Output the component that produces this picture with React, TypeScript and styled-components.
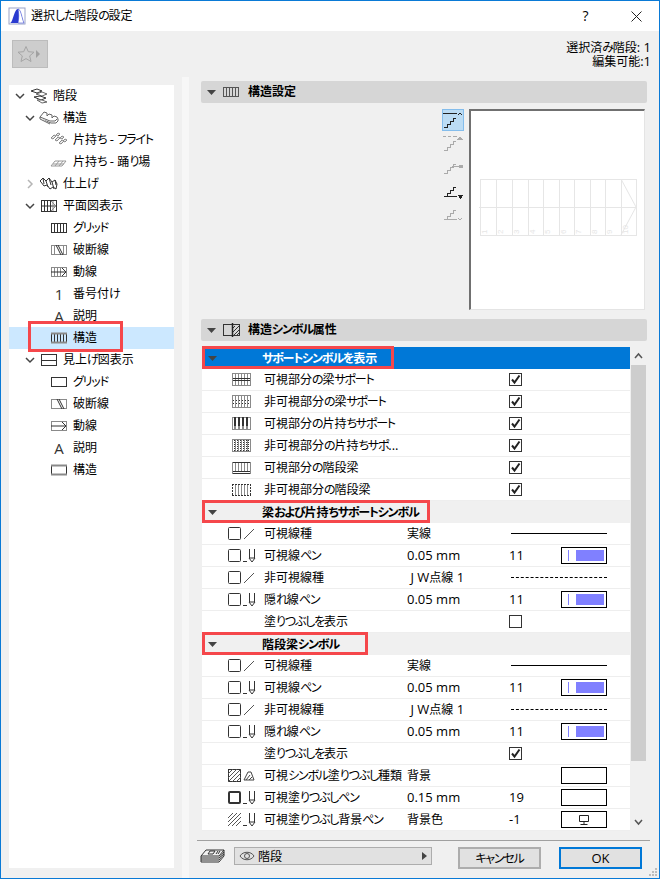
import React from "react";
import styled, { createGlobalStyle } from "styled-components";

const Global = createGlobalStyle`
    html, body { margin: 0; padding: 0; background: #f0f0f0; }
    body {
        font-family: "Noto Sans CJK JP", "Noto Sans", sans-serif;
        font-size: 12px;
        line-height: 14px;
        font-feature-settings: "palt";
        color: #000;
    }
`;

const Kana = styled.span`
    letter-spacing: -1.2px;
`;

const Latin = styled.span`
    font-family: "Open Sans", "Noto Sans CJK JP", sans-serif;
    font-size: 13px;
    line-height: 14px;
    white-space: pre;
`;

// Meiryo UI has narrow kana and a larger latin face, so split the text into runs
function Jp({ text }: { text: string }) {
    const parts = text.split(/([ぁ-んァ-ヶー]+|[0-9A-Za-z.:\- ]+)/).filter(Boolean);
    return (
        <>
            {parts.map((s, i) => {
                if (/^[ぁ-んァ-ヶー]/.test(s)) return <Kana key={i}>{s}</Kana>;
                if (/^[0-9A-Za-z.:\- ]/.test(s)) return <Latin key={i}>{s}</Latin>;
                return <span key={i}>{s}</span>;
            })}
        </>
    );
}

const Window = styled.div`
    position: relative;
    box-sizing: border-box;
    width: 660px;
    height: 879px;
    border: 1px solid #0a7ad6;
    display: flex;
    flex-direction: column;
    overflow: hidden;
    background: #f0f0f0;
`;

const TitleBar = styled.div`
    height: 30px;
    flex: none;
    background: #fff;
    display: flex;
    align-items: center;
    padding-left: 8px;
    gap: 6px;
`;

const TitleText = styled.span`
    flex: 1;
    margin-bottom: 2px;
`;

const TitleButton = styled.div`
    width: 45px;
    height: 30px;
    display: flex;
    align-items: center;
    justify-content: center;
    font-family: "Open Sans", sans-serif;
    font-size: 14px;
`;

const TopStrip = styled.div`
    height: 46px;
    flex: none;
    display: flex;
    justify-content: space-between;
    padding: 9px 8px 0 11px;
    box-sizing: border-box;
`;

const FavButton = styled.div`
    box-sizing: border-box;
    width: 36px;
    height: 28px;
    background: #cdcdcd;
    border: 1px solid #bcbcbc;
    display: flex;
    align-items: center;
    padding-left: 4px;
`;

const SelectionInfo = styled.div`
    text-align: right;
`;

const Main = styled.div`
    flex: 1;
    display: flex;
    min-height: 0;
`;

const Sidebar = styled.div`
    width: 181px;
    flex: none;
    box-sizing: border-box;
    padding: 8px 8px 10px 8px;
    display: flex;
`;

const Tree = styled.div`
    flex: 1;
    background: #fff;
`;

const TreeRow = styled.div<{ $level: number; $selected?: boolean }>`
    position: relative;
    height: 22px;
    display: flex;
    align-items: center;
    padding-left: ${(p) => 6 + p.$level * 10}px;
    background: ${(p) => (p.$selected ? "#cce8ff" : "transparent")};
`;

const Twisty = styled.div`
    width: 16px;
    flex: none;
    display: flex;
`;

const TreeIconBox = styled.div`
    width: 16px;
    height: 16px;
    flex: none;
    display: flex;
    align-items: center;
    justify-content: center;
    font-family: "Open Sans", sans-serif;
    font-size: 15px;
    color: #333;
`;

const TreeLabel = styled.span`
    margin: 0 0 2px 6px;
    white-space: nowrap;
`;

const Splitter = styled.div`
    width: 7px;
    flex: none;
    background: #f7f7f7;
`;

const RightPane = styled.div`
    flex: 1;
    margin-left: 11px;
    display: flex;
    flex-direction: column;
    min-width: 0;
`;

const PanelHeader = styled.div<{ $gap: number }>`
    box-sizing: border-box;
    width: 446px;
    height: 22px;
    margin: ${(p) => p.$gap}px 0 0 1px;
    background: #d6d6d6;
    border-radius: 2px;
    display: flex;
    align-items: center;
    padding-left: 6px;
    font-weight: 700;
    flex: none;
`;

const HeaderIcon = styled.div`
    margin-left: 7px;
    width: 18px;
    display: flex;
`;

const HeaderText = styled.span`
    margin: 0 0 2px 7px;
`;

const PreviewArea = styled.div`
    height: 201px;
    flex: none;
    margin-top: 6px;
    display: flex;
    justify-content: flex-end;
    padding-right: 14px;
    gap: 5px;
`;

const ModeColumn = styled.div`
    width: 22px;
    display: flex;
    flex-direction: column;
`;

const ModeButton = styled.div<{ $on?: boolean }>`
    box-sizing: border-box;
    width: 22px;
    height: 22px;
    margin-bottom: 1px;
    display: flex;
    align-items: center;
    justify-content: center;
    background: ${(p) => (p.$on ? "#bcdcf4" : "transparent")};
    border: 1px solid ${(p) => (p.$on ? "#84bdec" : "transparent")};
`;

const Preview = styled.div`
    box-sizing: border-box;
    width: 176px;
    height: 201px;
    background: #fff;
    border-top: 2px solid #707070;
    border-left: 2px solid #707070;
    border-right: 1px solid #e4e4e4;
    border-bottom: 1px solid #e4e4e4;
`;

const TableWrap = styled.div`
    width: 445px;
    height: 484px;
    margin: 6px 0 0 2px;
    display: flex;
    flex: none;
`;

const Table = styled.div`
    width: 428px;
    flex: none;
    display: flex;
    flex-direction: column;
    background: #fff;
`;

const Row = styled.div`
    box-sizing: border-box;
    height: 22px;
    flex: none;
    display: grid;
    grid-template-columns: 62px 143px 102px 52px 46px;
    align-items: center;
    border-bottom: 1px solid #eeeeee;
    white-space: nowrap;
`;

const SectionRow = styled.div<{ $active?: boolean }>`
    position: relative;
    height: 22px;
    flex: none;
    display: flex;
    align-items: center;
    background: ${(p) => (p.$active ? "#0078d7" : "#f0f0f0")};
    color: ${(p) => (p.$active ? "#fff" : "#000")};
    font-weight: 700;
    padding-left: 6px;
`;

const SectionLabel = styled.span`
    margin: 0 0 1px 45px;
`;

const Callout = styled.div<{ $left: number; $top: number; $w: number; $h: number }>`
    position: absolute;
    box-sizing: border-box;
    left: ${(p) => p.$left}px;
    top: ${(p) => p.$top}px;
    width: ${(p) => p.$w}px;
    height: ${(p) => p.$h}px;
    border: 3px solid #f5474b;
    z-index: 2;
`;

const IconCell = styled.div<{ $left: number }>`
    display: flex;
    align-items: center;
    gap: 2px;
    padding-left: ${(p) => p.$left}px;
`;

const ValueCell = styled.div`
    margin-bottom: 1px;
`;

const LineSample = styled.div<{ $dashed?: boolean }>`
    grid-column: 4 / span 2;
    margin-left: 2px;
    border-top: 1px ${(p) => (p.$dashed ? "dashed" : "solid")} #000;
`;

const CheckBox = styled.div`
    box-sizing: border-box;
    width: 13px;
    height: 13px;
    border: 1px solid #333;
    background: #fff;
    display: flex;
    align-items: center;
    justify-content: center;
`;

const Swatch = styled.div`
    box-sizing: border-box;
    width: 46px;
    height: 17px;
    border: 1px solid #000;
    background: #fff;
    display: flex;
    align-items: center;
    justify-content: center;
`;

const PenSwatch = styled(Swatch)`
    justify-content: flex-start;
    padding-left: 6px;
    &::before {
        content: "";
        width: 1px;
        height: 11px;
        background: #8080ff;
    }
    &::after {
        content: "";
        width: 28px;
        height: 11px;
        margin-left: 7px;
        background: #8080ff;
    }
`;

const ScrollBar = styled.div`
    width: 15px;
    margin-left: 1px;
    flex: none;
    display: flex;
    flex-direction: column;
    align-items: center;
    background: #f0f0f0;
`;

const ScrollArrow = styled.div`
    height: 18px;
    flex: none;
    display: flex;
    align-items: center;
    justify-content: center;
`;

const ScrollThumb = styled.div`
    width: 15px;
    height: 396px;
    flex: none;
    background: #cdcdcd;
`;

const ScrollGap = styled.div`
    flex: 1;
`;

const Footer = styled.div`
    box-sizing: border-box;
    flex: 1;
    margin: 9px 9px 0 -3px;
    border-top: 1px solid #a0a0a0;
    display: flex;
    padding: 6px 0 0 3px;
    align-items: flex-start;
`;

const LayerIcon = styled.div`
    width: 34px;
    flex: none;
`;

const Dropdown = styled.div`
    box-sizing: border-box;
    width: 198px;
    height: 18px;
    background: #e1e1e1;
    border: 1px solid #adadad;
    display: flex;
    align-items: center;
    padding: 0 4px;
    gap: 3px;
`;

const DropdownText = styled.span`
    flex: 1;
    margin-bottom: 1px;
`;

const DialogButton = styled.div<{ $primary?: boolean; $gap: number }>`
    box-sizing: border-box;
    width: 83px;
    height: 22px;
    margin-left: ${(p) => p.$gap}px;
    border: 2px solid ${(p) => (p.$primary ? "#0078d7" : "#adadad")};
    background: #e1e1e1;
    display: flex;
    align-items: center;
    justify-content: center;
`;

const Grip = styled.svg`
    position: absolute;
    right: 1px;
    bottom: 1px;
`;

const Ico = styled.svg`
    display: block;
    flex: none;
    overflow: visible;
`;

const g = "#8a8a8a";
const d = "#333";

function Down({ color = "#444" }: { color?: string }) {
    return (
        <Ico width="10" height="6" viewBox="0 0 10 6">
            <path d="M1 1l4 4 4-4" fill="none" stroke={color} strokeWidth="1.5" />
        </Ico>
    );
}

function RightChevron() {
    return (
        <Ico width="10" height="10" viewBox="0 0 10 10">
            <path d="M3 1l4 4-4 4" fill="none" stroke="#b5b5b5" strokeWidth="1.5" />
        </Ico>
    );
}

function Tri() {
    return (
        <Ico width="9" height="5" viewBox="0 0 9 5">
            <path d="M0 0h9L4.5 5z" fill="#444" />
        </Ico>
    );
}

function bars(xs: number[], y1: number, y2: number, color: string, dash?: string) {
    return xs.map((x) => (
        <path key={x} d={`M${x + 0.5} ${y1}V${y2}`} stroke={color} strokeDasharray={dash} />
    ));
}

const treeIcons: Record<string, React.ReactNode> = {
    stair: (
        <g fill="#fff" stroke={d}>
            <path d="M0 3l6-2 5 2-5 2z" />
            <path d="M5 6l6-2 5 2-5 2z" stroke="#666" />
            <path d="M3 9l6-1 6 2-5 2z" />
            <path d="M6 12l5 0 5 2-5 1z" stroke="#666" />
        </g>
    ),
    struct: (
        <g fill="#fff" stroke="#666">
            <path d="M-1 7l4-5 3 1v3l2-2 3 1v3l2-2 3 1 1 2v2l-2 2h-5l-10-4z" />
            <path d="M-1 7v2l10 5M-1 7l10 4h5l2-2" />
        </g>
    ),
    flight: (
        <g fill="#e8e8e8" stroke="#888">
            <path d="M0 6l3-3 2 1-3 3z" />
            <path d="M4 8l3-3 2 1-3 3z" />
            <path d="M8 11l3-3 2 1-3 3z" />
            <path d="M5 3l2-2 2 1-2 2z" />
            <path d="M9 6l2-2 2 1-2 2z" />
            <path d="M12 9l2-2 2 1-2 2z" />
        </g>
    ),
    landing: (
        <g fill="none" stroke="#999">
            <path d="M0 12l4-5h11l-4 5z" />
            <path d="M4 12l4-5M8 12l4-5M2 10h11" />
        </g>
    ),
    finish: (
        <g fill="#fff" stroke={d}>
            <path d="M-1 5l3-3 3 3 3-3 3 4 3-2 2 4-1 5-3-2-3 2-3-4-3 1-3-4z" />
            <path d="M2 2l1 6M5 5l2 6M8 2l2 7M11 6l2 7M14 4l1 5" />
        </g>
    ),
    planGrid: (
        <g fill="none">
            <rect x="0.5" y="2.5" width="15" height="11" stroke={d} />
            {bars([3, 6, 9], 3, 13, d)}
            <path d="M0 8h16" stroke={d} />
            <path d="M10 3l5 5-5 5M12 3v10" stroke={g} />
        </g>
    ),
    grid: (
        <g fill="none">
            <rect x="0.5" y="3.5" width="15" height="9" stroke={d} />
            {bars([3, 6, 9, 12], 4, 12, d)}
        </g>
    ),
    break: (
        <g fill="none">
            <rect x="0.5" y="3.5" width="15" height="9" stroke={g} />
            {bars([3, 12], 4, 12, g)}
            <path d="M5 3l5 10M7 3l5 10" stroke={d} />
        </g>
    ),
    walk: (
        <g fill="none">
            <rect x="0.5" y="3.5" width="15" height="9" stroke={g} />
            {bars([3, 6, 9], 4, 12, g)}
            <path d="M0 8h15M11 4l4 4-4 4" stroke={d} />
        </g>
    ),
    structBar: (
        <g fill="none">
            <rect x="0.5" y="3.5" width="15" height="9" stroke={d} />
            {bars([3, 6, 9, 12], 4, 12, d)}
            <path d="M0 3.5h16M0 12.5h16" stroke={g} strokeWidth="2" />
        </g>
    ),
    elevation: (
        <g fill="none" stroke={d}>
            <rect x="0.5" y="2.5" width="15" height="11" />
            <path d="M0 8h16" />
        </g>
    ),
    gridEmpty: <rect x="0.5" y="3.5" width="15" height="9" fill="none" stroke={d} />,
    breakEmpty: (
        <g fill="none">
            <rect x="0.5" y="3.5" width="15" height="9" stroke={g} />
            <path d="M6 3l5 10M8 3l5 10" stroke={d} />
        </g>
    ),
    walkEmpty: (
        <g fill="none">
            <rect x="0.5" y="3.5" width="15" height="9" stroke={g} />
            <path d="M0 8h15M11 4l4 4-4 4" stroke={d} />
        </g>
    ),
    structEmpty: (
        <g fill="none">
            <rect x="0.5" y="3.5" width="15" height="9" stroke={d} />
            <path d="M0 3.5h16M0 12.5h16" stroke={g} strokeWidth="2" />
        </g>
    ),
};

function TreeIcon({ kind }: { kind: string }) {
    if (kind === "1" || kind === "A") return <TreeIconBox>{kind}</TreeIconBox>;
    return (
        <TreeIconBox>
            <Ico width="16" height="16" viewBox="0 0 16 16" shapeRendering={kind === "grid" || kind === "elevation" ? "crispEdges" : undefined}>
                {treeIcons[kind]}
            </Ico>
        </TreeIconBox>
    );
}

type TreeItem = { level: number; icon: string; label: string; open?: boolean; closed?: boolean; selected?: boolean };

const treeItems: TreeItem[] = [
    { level: 0, icon: "stair", label: "階段", open: true },
    { level: 1, icon: "struct", label: "構造", open: true },
    { level: 2, icon: "flight", label: "片持ち - フライト" },
    { level: 2, icon: "landing", label: "片持ち - 踊り場" },
    { level: 1, icon: "finish", label: "仕上げ", closed: true },
    { level: 1, icon: "planGrid", label: "平面図表示", open: true },
    { level: 2, icon: "grid", label: "グリッド" },
    { level: 2, icon: "break", label: "破断線" },
    { level: 2, icon: "walk", label: "動線" },
    { level: 2, icon: "1", label: "番号付け" },
    { level: 2, icon: "A", label: "説明" },
    { level: 2, icon: "structBar", label: "構造", selected: true },
    { level: 1, icon: "elevation", label: "見上げ図表示", open: true },
    { level: 2, icon: "gridEmpty", label: "グリッド" },
    { level: 2, icon: "breakEmpty", label: "破断線" },
    { level: 2, icon: "walkEmpty", label: "動線" },
    { level: 2, icon: "A", label: "説明" },
    { level: 2, icon: "structEmpty", label: "構造" },
];

const symbolXs = [3, 6, 9, 12, 15];
const cantiXs = [2, 3, 6, 7, 10, 11, 14, 15];

const symbolIcons: Record<string, React.ReactNode> = {
    beam: (
        <g fill="none">
            <rect x="0.5" y="0.5" width="18" height="12" stroke={g} />
            {bars(symbolXs, 1, 12, g)}
            <path d="M1 5.5h17M1 7.5h17" stroke={d} />
        </g>
    ),
    beamHidden: (
        <g fill="none">
            <rect x="0.5" y="0.5" width="18" height="12" stroke={g} />
            {bars(symbolXs, 1, 12, g)}
            <path d="M1 5.5h17M1 8.5h17" stroke={d} strokeDasharray="1 2" />
        </g>
    ),
    canti: (
        <g fill="none">
            <rect x="0.5" y="0.5" width="18" height="12" stroke={g} />
            {bars(cantiXs, 9, 12, g)}
            {bars(cantiXs, 0, 9, d)}
        </g>
    ),
    cantiHidden: (
        <g fill="none">
            <rect x="0.5" y="0.5" width="18" height="12" stroke={g} />
            {bars(symbolXs, 1, 12, g)}
            {bars([2, 5, 8, 11, 14, 16], 1, 12, d, "1 1")}
        </g>
    ),
    stringer: (
        <g fill="none">
            <path d="M0 1.5h19M0 10.5h19M0 12.5h19" stroke={d} />
            <path d="M0.5 1v12M18.5 1v12" stroke={g} />
            {bars(symbolXs, 2, 10, g)}
        </g>
    ),
    stringerHidden: (
        <g fill="none">
            {bars(symbolXs, 2, 12, g)}
            <path d="M0 1.5h19M0 12.5h19" stroke={d} strokeDasharray="2 1" />
            <path d="M0.5 1v12M18.5 1v12" stroke={d} strokeDasharray="2 1" />
        </g>
    ),
};

function SymbolIcon({ kind }: { kind: string }) {
    return (
        <Ico width="19" height="14" viewBox="0 0 19 14" shapeRendering="crispEdges">
            {symbolIcons[kind]}
        </Ico>
    );
}

function SmallBox({ heavy }: { heavy?: boolean }) {
    return (
        <Ico width="13" height="13" viewBox="0 0 13 13">
            <rect x={heavy ? 1 : 0.5} y={heavy ? 1 : 0.5} width={heavy ? 11 : 12} height={heavy ? 11 : 12} rx="1" fill="none" stroke="#333" strokeWidth={heavy ? 2 : 1} />
        </Ico>
    );
}

function HatchBox({ framed }: { framed?: boolean }) {
    return (
        <Ico width="13" height="13" viewBox="0 0 13 13">
            {framed && <rect x="0.5" y="0.5" width="12" height="12" fill="none" stroke="#333" />}
            <path d="M0 5l5-5M0 9l9-9M0 13L13 0M4 13l9-9M8 13l5-5" stroke="#555" fill="none" />
        </Ico>
    );
}

function SlashIcon() {
    return (
        <Ico width="12" height="13" viewBox="0 0 12 13">
            <path d="M1 12L11 2" stroke="#555" fill="none" />
        </Ico>
    );
}

function PenIcon() {
    return (
        <Ico width="13" height="15" viewBox="0 0 13 15">
            <path d="M0 13.5h4M6.5 1v9M11.5 1v9M6 10h6l-3 4z" stroke="#333" fill="none" />
        </Ico>
    );
}

function FillIcon() {
    return (
        <Ico width="12" height="13" viewBox="0 0 12 13">
            <path d="M1 11l4-8h3l3 8zM3 11l4-5M6 11l3-3" stroke="#444" fill="none" />
        </Ico>
    );
}

function Check() {
    return (
        <Ico width="11" height="11" viewBox="0 0 11 11">
            <path d="M2 5.5l2.5 3L9.5 1.5" stroke="#222" strokeWidth="2" fill="none" />
        </Ico>
    );
}

function SymbolRow({ icon, label, checked }: { icon: string; label: string; checked?: boolean }) {
    return (
        <Row>
            <IconCell $left={30}>
                <SymbolIcon kind={icon} />
            </IconCell>
            <ValueCell>
                <Jp text={label} />
            </ValueCell>
            <span />
            <CheckBox>{checked && <Check />}</CheckBox>
        </Row>
    );
}

function LineRow({ label, value, dashed }: { label: string; value: string; dashed?: boolean }) {
    return (
        <Row>
            <IconCell $left={26}>
                <SmallBox />
                <SlashIcon />
            </IconCell>
            <ValueCell>
                <Jp text={label} />
            </ValueCell>
            <ValueCell>
                <Jp text={value} />
            </ValueCell>
            <LineSample $dashed={dashed} />
        </Row>
    );
}

function PenRow({ label }: { label: string }) {
    return (
        <Row>
            <IconCell $left={26}>
                <SmallBox />
                <PenIcon />
            </IconCell>
            <ValueCell>
                <Jp text={label} />
            </ValueCell>
            <ValueCell>
                <Jp text="0.05 mm" />
            </ValueCell>
            <ValueCell>
                <Jp text="11" />
            </ValueCell>
            <PenSwatch />
        </Row>
    );
}

function FillRow({ checked }: { checked?: boolean }) {
    return (
        <Row>
            <span />
            <ValueCell>
                <Jp text="塗りつぶしを表示" />
            </ValueCell>
            <span />
            <CheckBox>{checked && <Check />}</CheckBox>
        </Row>
    );
}

function Section({ label, mark, active }: { label: string; mark: number; active?: boolean }) {
    return (
        <SectionRow $active={active}>
            <Tri />
            <SectionLabel>
                <Jp text={label} />
            </SectionLabel>
            <Callout $left={0} $top={-1} $w={mark} $h={23} />
        </SectionRow>
    );
}

function StairMode({ tone, kind }: { tone: string; kind: number }) {
    const stair = "M1 16h3v-3h3v-3h3v-3h3";
    return (
        <Ico width="20" height="18" viewBox="0 0 20 18" fill="none" stroke={tone} shapeRendering="crispEdges">
            <path d={stair} />
            {kind === 0 && <path d="M0 2.5h14M15 4l2-2 2 2" />}
            {kind === 1 && <path d="M0 2.5h3M5 2.5h3M10 2.5h4M15 5h4l-2-2z" fill={tone} />}
            {kind === 2 && <path d="M9 9.5h8" />}
            {kind === 2 && <circle cx="18" cy="9.5" r="1.5" fill={tone} />}
            {kind === 3 && <path d="M2 16.5h12M15 15h5l-2.5 3z" fill={tone} />}
            {kind === 4 && <path d="M2 16.5h12M15 15l2 2 2-2" />}
        </Ico>
    );
}

function PreviewDrawing() {
    const xs = [25, 41, 57, 72, 88, 103, 119, 134, 150];
    const lefts = [9, ...xs];
    const c = "#e6e6e6";
    return (
        <Ico width="173" height="198" viewBox="0 0 173 198">
            <g fill="none" stroke={c}>
                <rect x="9.5" y="68.5" width="156" height="56" />
                <path d="M8 96.5h158" />
                {xs.map((x) => (
                    <path key={x} d={`M${x + 0.5} 68v56`} />
                ))}
                <path d="M150 68l15 28-15 28" />
            </g>
            {lefts.map((x, i) => (
                <text key={x} x={x + 7} y="123" fontSize="8" fill={c} transform={`rotate(-90 ${x + 7} 123)`} fontFamily="Liberation Sans">
                    {i + 1}
                </text>
            ))}
        </Ico>
    );
}

export default function App() {
    return (
        <>
            <Global />
            <Window>
                <TitleBar>
                    <Ico width="16" height="16" viewBox="0 0 16 16">
                        <rect width="16" height="16" fill="#fff" stroke="#9aa3c8" />
                        <path d="M1 15C4 15 5 1 9 1c3 0 4 10 6 14z" fill="#2a3bd0" />
                        <path d="M9 1c3 0 4 10 6 14H9C10 10 10 5 9 1z" fill="#fff" stroke="#2a3bd0" strokeWidth="0.5" />
                    </Ico>
                    <TitleText>
                        <Jp text="選択した階段の設定" />
                    </TitleText>
                    <TitleButton>?</TitleButton>
                    <TitleButton>
                        <Ico width="11" height="11" viewBox="0 0 11 11">
                            <path d="M0.5 0.5l10 10M10.5 0.5l-10 10" stroke="#222" fill="none" />
                        </Ico>
                    </TitleButton>
                </TitleBar>
                <TopStrip>
                    <FavButton>
                        <Ico width="18" height="18" viewBox="0 0 18 18">
                            <path d="M9 1.5l2.3 5.2 5.7.5-4.3 3.7 1.3 5.6L9 13.6l-5 2.9 1.3-5.6L1 7.2l5.7-.5z" fill="none" stroke="#a5a5a5" />
                        </Ico>
                        <Ico width="6" height="8" viewBox="0 0 6 8">
                            <path d="M1 0l4 4-4 4z" fill="#a0a0a0" />
                        </Ico>
                    </FavButton>
                    <SelectionInfo>
                        <div>
                            <Jp text="選択済み階段: 1" />
                        </div>
                        <div>
                            <Jp text="編集可能:1" />
                        </div>
                    </SelectionInfo>
                </TopStrip>
                <Main>
                    <Sidebar>
                        <Tree>
                            {treeItems.map((item, i) => (
                                <TreeRow key={i} $level={item.level} $selected={item.selected}>
                                    <Twisty>
                                        {item.open && <Down />}
                                        {item.closed && <RightChevron />}
                                    </Twisty>
                                    <TreeIcon kind={item.icon} />
                                    <TreeLabel>
                                        <Jp text={item.label} />
                                    </TreeLabel>
                                    {item.selected && <Callout $left={19} $top={-6} $w={95} $h={31} />}
                                </TreeRow>
                            ))}
                        </Tree>
                    </Sidebar>
                    <Splitter />
                    <RightPane>
                        <PanelHeader $gap={4}>
                            <Tri />
                            <HeaderIcon>
                                <Ico width="16" height="12" viewBox="0 0 16 12" shapeRendering="crispEdges">
                                    <rect x="0.5" y="1.5" width="15" height="9" fill="none" stroke="#555" />
                                    {bars([3, 6, 9, 12], 2, 10, "#555")}
                                </Ico>
                            </HeaderIcon>
                            <HeaderText>構造設定</HeaderText>
                        </PanelHeader>
                        <PreviewArea>
                            <ModeColumn>
                                {[0, 1, 2, 3, 4].map((k) => (
                                    <ModeButton key={k} $on={k === 0}>
                                        <StairMode kind={k} tone={k === 0 || k === 3 ? "#222" : "#aaa"} />
                                    </ModeButton>
                                ))}
                            </ModeColumn>
                            <Preview>
                                <PreviewDrawing />
                            </Preview>
                        </PreviewArea>
                        <PanelHeader $gap={9}>
                            <Tri />
                            <HeaderIcon>
                                <Ico width="17" height="14" viewBox="0 0 17 14">
                                    <rect x="0.5" y="1.5" width="16" height="11" fill="none" stroke="#333" />
                                    <path d="M10 13l7-7M10 9l6-6M12 3l-2 2M14 12l3-3" stroke="#333" fill="none" />
                                    <path d="M9.5 0v14" stroke="#222" strokeWidth="1.5" />
                                </Ico>
                            </HeaderIcon>
                            <HeaderText>
                                <Jp text="構造シンボル属性" />
                            </HeaderText>
                        </PanelHeader>
                        <TableWrap>
                            <Table>
                                <Section label="サポートシンボルを表示" mark={192} active />
                                <SymbolRow icon="beam" label="可視部分の梁サポート" checked />
                                <SymbolRow icon="beamHidden" label="非可視部分の梁サポート" checked />
                                <SymbolRow icon="canti" label="可視部分の片持ちサポート" checked />
                                <SymbolRow icon="cantiHidden" label="非可視部分の片持ちサポ..." checked />
                                <SymbolRow icon="stringer" label="可視部分の階段梁" checked />
                                <SymbolRow icon="stringerHidden" label="非可視部分の階段梁" checked />
                                <Section label="梁および片持ちサポートシンボル" mark={228} />
                                <LineRow label="可視線種" value="実線" />
                                <PenRow label="可視線ペン" />
                                <LineRow label="非可視線種" value=" J W点線 1" dashed />
                                <PenRow label="隠れ線ペン" />
                                <FillRow />
                                <Section label="階段梁シンボル" mark={166} />
                                <LineRow label="可視線種" value="実線" />
                                <PenRow label="可視線ペン" />
                                <LineRow label="非可視線種" value=" J W点線 1" dashed />
                                <PenRow label="隠れ線ペン" />
                                <FillRow checked />
                                <Row>
                                    <IconCell $left={26}>
                                        <HatchBox framed />
                                        <FillIcon />
                                    </IconCell>
                                    <ValueCell>
                                        <Jp text="可視シンボル塗りつぶし種類" />
                                    </ValueCell>
                                    <ValueCell>背景</ValueCell>
                                    <span />
                                    <Swatch />
                                </Row>
                                <Row>
                                    <IconCell $left={26}>
                                        <SmallBox heavy />
                                        <PenIcon />
                                    </IconCell>
                                    <ValueCell>
                                        <Jp text="可視塗りつぶしペン" />
                                    </ValueCell>
                                    <ValueCell>
                                        <Jp text="0.15 mm" />
                                    </ValueCell>
                                    <ValueCell>
                                        <Jp text="19" />
                                    </ValueCell>
                                    <Swatch />
                                </Row>
                                <Row>
                                    <IconCell $left={26}>
                                        <HatchBox />
                                        <PenIcon />
                                    </IconCell>
                                    <ValueCell>
                                        <Jp text="可視塗りつぶし背景ペン" />
                                    </ValueCell>
                                    <ValueCell>背景色</ValueCell>
                                    <ValueCell>
                                        <Jp text="-1" />
                                    </ValueCell>
                                    <Swatch>
                                        <Ico width="12" height="12" viewBox="0 0 12 12">
                                            <path d="M1.5 1.5h9v6h-9zM6 8v2M2.5 10.5h7" stroke="#222" fill="none" />
                                        </Ico>
                                    </Swatch>
                                </Row>
                            </Table>
                            <ScrollBar>
                                <ScrollArrow>
                                    <Ico width="9" height="6" viewBox="0 0 9 6">
                                        <path d="M1 5l3.5-4 3.5 4" fill="none" stroke="#555" strokeWidth="1.5" />
                                    </Ico>
                                </ScrollArrow>
                                <ScrollThumb />
                                <ScrollGap />
                                <ScrollArrow>
                                    <Ico width="9" height="6" viewBox="0 0 9 6">
                                        <path d="M1 1l3.5 4 3.5-4" fill="none" stroke="#555" strokeWidth="1.5" />
                                    </Ico>
                                </ScrollArrow>
                            </ScrollBar>
                        </TableWrap>
                        <Footer>
                            <LayerIcon>
                                <Ico width="25" height="16" viewBox="0 0 25 16">
                                    <g fill="none" stroke="#333">
                                        <path d="M1 9l5-6h18l-5 6z" />
                                        <path d="M1 9v2h18l5-6V3M1 11v2h18l5-6V5M1 13v2h18l5-6V7" />
                                        <path d="M8 7l2-3h5l-2 3zM16 7l2-3M18 7l2-3" />
                                    </g>
                                </Ico>
                            </LayerIcon>
                            <Dropdown>
                                <Ico width="16" height="10" viewBox="0 0 16 10">
                                    <path d="M1 5c3-5 11-5 14 0-3 5-11 5-14 0z" fill="none" stroke="#555" />
                                    <circle cx="8" cy="5" r="2.5" fill="none" stroke="#555" />
                                </Ico>
                                <DropdownText>階段</DropdownText>
                                <Ico width="5" height="8" viewBox="0 0 5 8">
                                    <path d="M0 0l5 4-5 4z" fill="#444" />
                                </Ico>
                            </Dropdown>
                            <DialogButton $gap={26}>
                                <Jp text="キャンセル" />
                            </DialogButton>
                            <DialogButton $gap={18} $primary>
                                <Jp text="OK" />
                            </DialogButton>
                        </Footer>
                    </RightPane>
                </Main>
                <Grip width="9" height="9" viewBox="0 0 9 9" fill="#bdbdbd">
                    <rect x="6" y="0" width="2" height="2" />
                    <rect x="3" y="3" width="2" height="2" />
                    <rect x="6" y="3" width="2" height="2" />
                    <rect x="0" y="6" width="2" height="2" />
                    <rect x="3" y="6" width="2" height="2" />
                    <rect x="6" y="6" width="2" height="2" />
                </Grip>
            </Window>
        </>
    );
}
